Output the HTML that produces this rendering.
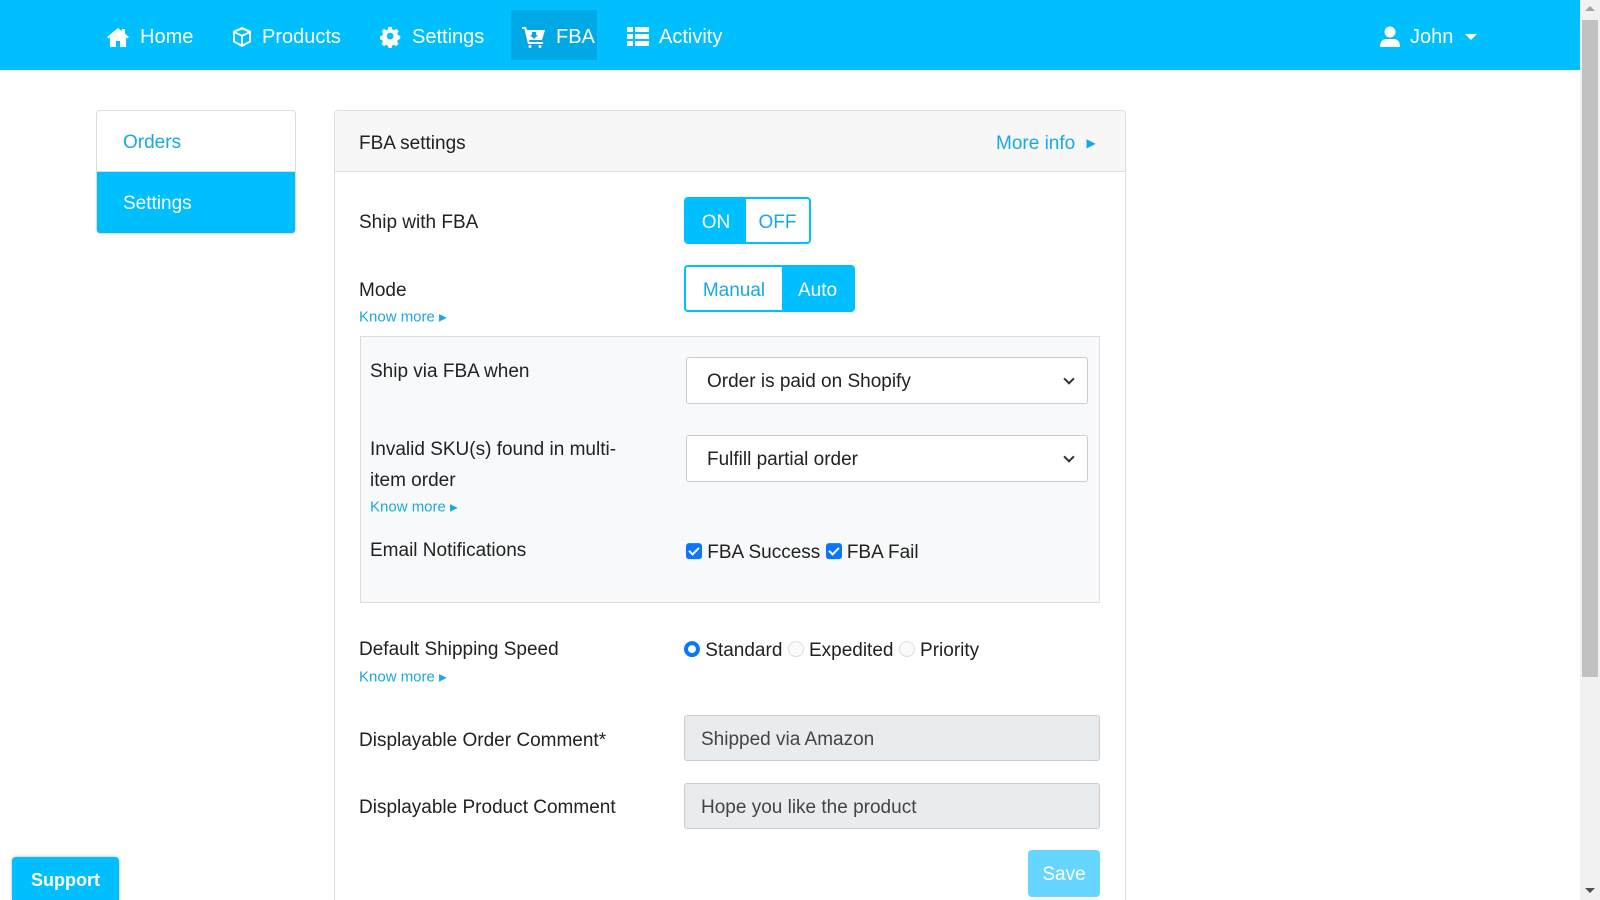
<!DOCTYPE html>
<html style="overflow:hidden;height:900px"><head><meta charset="utf-8"><style>
*{box-sizing:border-box;margin:0;padding:0}
body{width:1600px;height:900px;overflow:hidden;background:#fff;font-family:"Liberation Sans",sans-serif;color:#222;position:relative;font-size:19px}
.a{position:absolute;white-space:nowrap}
.nav{position:absolute;left:0;top:0;width:1580px;height:70px;background:#00bfff}
.ni{position:absolute;top:12px;height:50px;display:flex;align-items:center;color:#fff;font-size:20px;gap:10px}
.ni svg{fill:#fff}
.lbl{position:absolute;left:359px;font-size:19px;color:#222;transform:translateY(-45%)}
.km{position:absolute;font-size:15px;color:#1aa7e6;transform:translateY(-45%)}
.sel{position:absolute;left:686px;width:402px;height:47px;border:1px solid #ccc;border-radius:3px;background:#fff;font-size:19px;padding-left:20px;line-height:48px}
.sel:after{content:"";position:absolute;right:14px;top:17px;width:6px;height:6px;border-right:2px solid #333;border-bottom:2px solid #333;transform:rotate(45deg)}
.inp{position:absolute;left:684px;width:416px;height:46px;border:1px solid #ccc;border-radius:3px;background:#e9ecef;font-size:19px;padding-left:16px;line-height:48px;color:#444}
.cb{display:inline-block;width:16px;height:16px;background:#0a75ff;border-radius:3px;position:relative;vertical-align:-1px}
.cb:after{content:"";position:absolute;left:5px;top:2px;width:4px;height:8px;border:solid #fff;border-width:0 2px 2px 0;transform:rotate(45deg)}
.rd{display:inline-block;width:16px;height:16px;border-radius:50%;border:1px solid #ddd;background:#fafafa;vertical-align:-1px}
</style></head><body>
<div class="nav"></div>
<div class="a" style="left:511px;top:10px;width:86px;height:50px;background:#00a9e6"></div>
<div class="ni" style="left:106px"><svg width="24" height="22" viewBox="0 0 24 22"><path d="M12 2L1 11l1.5 1.5L4 11.3V21h6v-6h4v6h6v-9.7l1.5 1.2L23 11 19 7.7V3h-3v2.2z"/></svg>Home</div>
<div class="ni" style="left:232px"><svg width="20" height="22" viewBox="0 0 20 22"><path d="M10 1L1 5v11l9 5 9-5V5zM10 3.5L16 6l-6 2.7L4 6zM3 7.5l6 2.7v8L3 15zM17 7.5V15l-6 3.2v-8z"/></svg>Products</div>
<div class="ni" style="left:380px"><svg width="22" height="22" viewBox="0 0 24 24"><path d="M10 1h4l.6 3 2.2 1 2.6-1.7 2.8 2.8L20.5 8.7l.9 2.3 2.6.6v4l-2.6.6-1 2.3 1.6 2.5-2.8 2.8-2.5-1.6-2.3 1L14 26h-4l-.6-2.6-2.3-1-2.5 1.6-2.8-2.8L3.4 18.7l-1-2.3L0 16v-4l2.6-.6 1-2.3L2 6.1l2.8-2.8L7.2 5l2.2-1zM12 8a4 4 0 100 8 4 4 0 100-8z" transform="scale(.92)"/></svg>Settings</div>
<div class="ni" style="left:522px"><svg width="24" height="22" viewBox="0 0 24 22"><path d="M0 1h4l1 3h18l-3 10H7l.5 2H21v2H6L2.5 3H0zM10 6v3H8l4 4 4-4h-2V6zM8 19a1.5 1.5 0 100 3 1.5 1.5 0 100-3zM18 19a1.5 1.5 0 100 3 1.5 1.5 0 100-3z"/></svg>FBA</div>
<div class="ni" style="left:627px"><svg width="22" height="20" viewBox="0 0 22 20"><path d="M0 0h6v5H0zM8 0h14v5H8zM0 7h6v5H0zM8 7h14v5H8zM0 14h6v5H0zM8 14h14v5H8z"/></svg>Activity</div>
<div class="ni" style="left:1380px"><svg width="20" height="22" viewBox="0 0 20 22"><circle cx="10" cy="6" r="5.5"/><path d="M0 21c0-6 3-8 6-8h8c3 0 6 2 6 8z"/></svg>John<svg width="12" height="8" viewBox="0 0 12 8" style="margin-left:2px"><path d="M0 1h12L6 7z"/></svg></div>
<div class="a" style="left:1580px;top:0;width:20px;height:900px;background:#f1f1f1"></div>
<div class="a" style="left:1582px;top:20px;width:16px;height:657px;background:#c1c1c1"></div>
<div class="a" style="left:1585px;top:6px;width:0;height:0;border:5px solid transparent;border-bottom-color:#a3a3a3;border-top:0"></div>
<div class="a" style="left:1585px;top:888px;width:0;height:0;border:5px solid transparent;border-top-color:#505050;border-bottom:0"></div>
<div class="a" style="left:96px;top:110px;width:200px;height:124px;border:1px solid #ddd;border-radius:4px;overflow:hidden">
<div style="height:61px;line-height:64px;padding-left:26px;color:#1aa7e6;font-size:19px;border-bottom:1px solid #ddd">Orders</div>
<div style="height:63px;line-height:64px;padding-left:26px;background:#00bfff;color:#fff;font-size:19px">Settings</div></div>
<div class="a" style="left:334px;top:110px;width:792px;height:790px;border:1px solid #ddd;border-bottom:none;border-radius:4px 4px 0 0;overflow:hidden">
<div style="height:61px;background:#f7f7f7;border-bottom:1px solid #ddd"></div></div>
<div class="lbl" style="top:143px">FBA settings</div>
<div class="a" style="left:996px;top:143px;transform:translateY(-45%);color:#1aa7e6;font-size:19px">More info <span style="font-size:12px;vertical-align:2px;margin-left:6px">&#9654;</span></div>
<div class="lbl" style="top:222px">Ship with FBA</div>
<div class="a" style="left:684px;top:197px;width:127px;height:47px;border:2px solid #00bfff;border-radius:4px;overflow:hidden;display:flex;font-size:19px">
<div style="width:60px;background:#00bfff;color:#fff;text-align:center;line-height:47px">ON</div><div style="flex:1;color:#1aa7e6;text-align:center;line-height:47px">OFF</div></div>
<div class="lbl" style="top:290px">Mode</div>
<div class="km" style="left:359px;top:316px">Know more <span style="font-size:10px;vertical-align:1px">&#9654;</span></div>
<div class="a" style="left:684px;top:265px;width:171px;height:47px;border:2px solid #00bfff;border-radius:4px;overflow:hidden;display:flex;font-size:19px">
<div style="width:96px;color:#1aa7e6;text-align:center;line-height:47px">Manual</div><div style="flex:1;background:#00bfff;color:#fff;text-align:center;line-height:47px">Auto</div></div>
<div class="a" style="left:360px;top:336px;width:740px;height:267px;background:#f8f9fa;border:1px solid #ddd"></div>
<div class="lbl" style="left:370px;top:371px">Ship via FBA when</div>
<div class="sel" style="top:357px">Order is paid on Shopify</div>
<div class="lbl" style="left:370px;top:449px">Invalid SKU(s) found in multi-</div>
<div class="lbl" style="left:370px;top:480px">item order</div>
<div class="km" style="left:370px;top:506px">Know more <span style="font-size:10px;vertical-align:1px">&#9654;</span></div>
<div class="sel" style="top:435px">Fulfill partial order</div>
<div class="lbl" style="left:370px;top:550px">Email Notifications</div>
<div class="a" style="left:686px;top:552px;transform:translateY(-45%);font-size:19px"><span class="cb"></span> FBA Success <span class="cb"></span> FBA Fail</div>
<div class="lbl" style="top:649px">Default Shipping Speed</div>
<div class="km" style="left:359px;top:676px">Know more <span style="font-size:10px;vertical-align:1px">&#9654;</span></div>
<div class="a" style="left:684px;top:650px;transform:translateY(-45%);font-size:19px"><span class="rd" style="border:4px solid #0a75ff;background:#fff"></span> Standard <span class="rd"></span> Expedited <span class="rd"></span> Priority</div>
<div class="lbl" style="top:740px">Displayable Order Comment*</div>
<div class="inp" style="top:715px">Shipped via Amazon</div>
<div class="lbl" style="top:807px">Displayable Product Comment</div>
<div class="inp" style="top:783px">Hope you like the product</div>
<div class="a" style="left:1028px;top:850px;width:72px;height:47px;background:#66d5ff;border-radius:4px;color:#fff;font-size:19px;text-align:center;line-height:50px">Save</div>
<div class="a" style="left:12px;top:857px;width:107px;height:43px;background:#00bfff;border-radius:4px 4px 0 0;color:#fff;font-weight:bold;font-size:18px;text-align:center;line-height:46px;box-shadow:0 0 3px rgba(0,0,0,.3)">Support</div>
</body></html>
